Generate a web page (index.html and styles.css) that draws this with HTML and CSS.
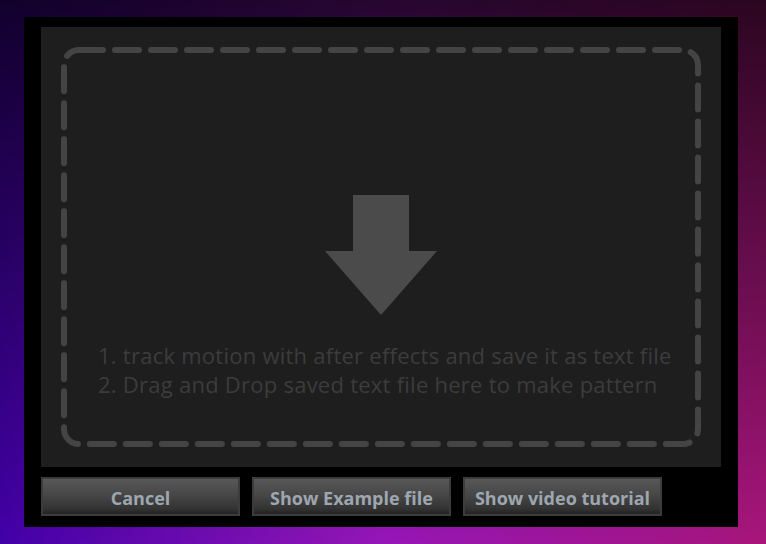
FILE: index.html
```html
<!DOCTYPE html>
<html>
<head>
<meta charset="utf-8">
<link rel="stylesheet" href="styles.css">
</head>
<body>
<div class="panel">
  <div class="drop">
    <svg class="dash" width="680" height="440" viewBox="0 0 680 440">
      <rect x="23" y="23" width="634" height="394" rx="15" ry="15" fill="none" stroke="#444444" stroke-width="6" stroke-linecap="round" stroke-dasharray="24 12"/>
    </svg>
    <svg class="arrow" width="112" height="120" viewBox="0 0 112 120">
      <polygon points="28,0 84,0 84,56 112,56 56,120 0,56 28,56" fill="#4b4b4b"/>
    </svg>
    <div class="steps">
      <div>1. track motion with after effects and save it as text file</div>
      <div>2. Drag and Drop saved text file here to make pattern</div>
    </div>
  </div>
  <div class="buttons">
    <button class="btn">Cancel</button>
    <button class="btn">Show Example file</button>
    <button class="btn">Show video tutorial</button>
  </div>
</div>
</body>
</html>
```
FILE: styles.css
```css
html, body {
  margin: 0;
  padding: 0;
  height: 544px;
  overflow: hidden;
}
body {
  background:
    linear-gradient(180deg, rgba(0,0,0,0.74) 0%, rgba(0,0,0,0.38) 50%, rgba(0,0,0,0) 100%),
    linear-gradient(90deg, #4200a8 0%, #9616b8 50%, #a8157a 100%);
  font-family: "Open Sans", "Noto Sans", sans-serif;
  padding: 17px 0 0 24px;
  box-sizing: border-box;
}
.panel {
  width: 714px;
  height: 510px;
  background: #000;
  box-sizing: border-box;
  padding: 10px 17px 11px 17px;
  display: flex;
  flex-direction: column;
}
.drop {
  position: relative;
  width: 680px;
  height: 440px;
  background: #1e1e1e;
  display: flex;
  flex-direction: column;
  align-items: center;
}
.dash {
  position: absolute;
  left: 0;
  top: 0;
}
.arrow {
  margin-top: 168px;
}
.steps {
  align-self: flex-start;
  margin-left: 57px;
  margin-top: 26px;
  color: #3c3c3c;
  font-size: 22px;
  line-height: 29px;
  font-family: "Open Sans", sans-serif;
  letter-spacing: 0.25px;
}
.buttons {
  display: flex;
  gap: 12px;
  margin-top: 10px;
}
.btn {
  width: 199px;
  height: 39px;
  border: 2px solid #3c3c3c;
  background: linear-gradient(180deg, #585858 0%, #474747 45%, #333333 85%, #222 100%);
  color: #9ea6b0;
  font-family: "Open Sans", sans-serif;
  font-weight: 700;
  font-size: 18px;
  padding: 2px 0 0 0;
  margin: 0;
}
```
